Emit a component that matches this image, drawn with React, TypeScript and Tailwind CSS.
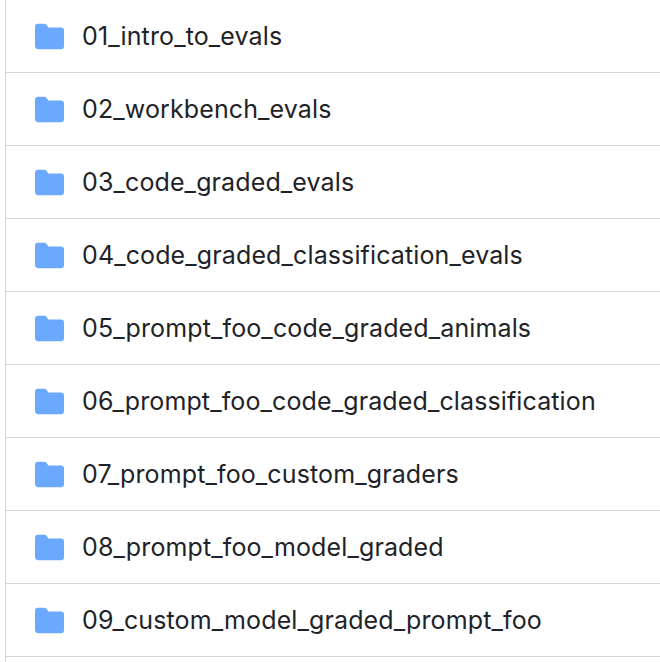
import React from 'react';

const folders = [
  '01_intro_to_evals',
  '02_workbench_evals',
  '03_code_graded_evals',
  '04_code_graded_classification_evals',
  '05_prompt_foo_code_graded_animals',
  '06_prompt_foo_code_graded_classification',
  '07_prompt_foo_custom_graders',
  '08_prompt_foo_model_graded',
  '09_custom_model_graded_prompt_foo',
];

const FolderIcon = () => (
  <svg viewBox="0 0 16 16" className="w-[29px] h-[29px] mb-[2px] shrink-0 text-[#6ba9ff]" fill="currentColor">
    <path d="M1.75 1A1.75 1.75 0 0 0 0 2.75v10.5C0 14.22.78 15 1.75 15h12.5A1.75 1.75 0 0 0 16 13.25v-8.5A1.75 1.75 0 0 0 14.25 3H7.5a.25.25 0 0 1-.2-.1l-.9-1.2C6.07 1.26 5.55 1 5 1H1.75Z" />
  </svg>
);

const App: React.FC = () => {
  return (
    <div className="w-[660px] h-[662px] overflow-hidden bg-white font-['Inter',sans-serif] text-[#1f2328]">
      <div className="ml-[5px] border-l border-[#d0d7de]">
        {folders.map((name) => (
          <div key={name} className="h-[73px] flex items-center border-b border-[#d0d7de] pl-[29px] pt-[2px]">
            <FolderIcon />
            <span className="ml-[18px] text-[25px] tracking-[0.12px] whitespace-nowrap">{name}</span>
          </div>
        ))}
        <div className="h-[10px]" />
      </div>
    </div>
  );
};

export default App;
